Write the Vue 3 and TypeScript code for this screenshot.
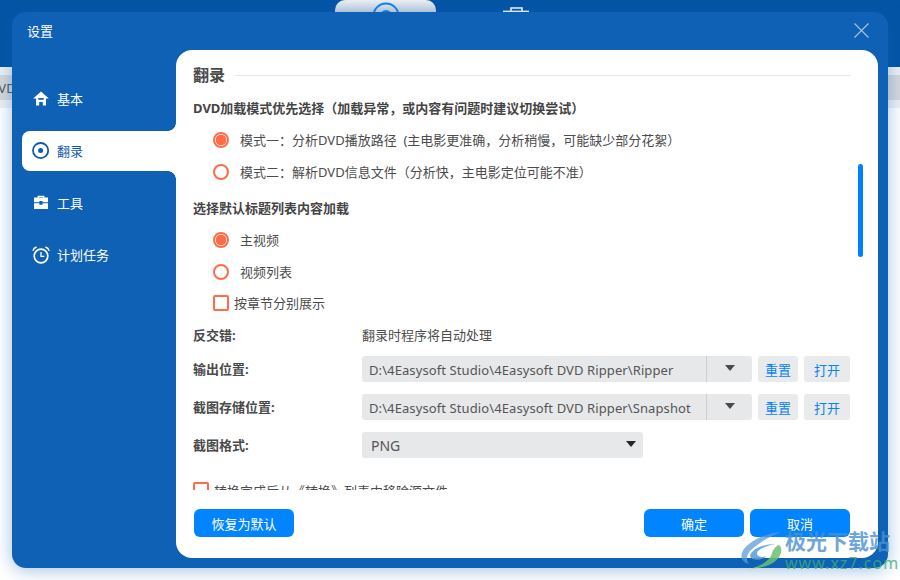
<script setup lang="ts">
interface NavItem { label: string; icon: string; active?: boolean }
const nav: NavItem[] = [
  { label: '基本', icon: 'home' },
  { label: '翻录', icon: 'target', active: true },
  { label: '工具', icon: 'case' },
  { label: '计划任务', icon: 'clock' },
]
const paths = [
  { label: '输出位置:', value: 'D:\\4Easysoft Studio\\4Easysoft DVD Ripper\\Ripper' },
  { label: '截图存储位置:', value: 'D:\\4Easysoft Studio\\4Easysoft DVD Ripper\\Snapshot' },
]
</script>

<template>
  <div class="desktop">
    <header class="app-head">
      <div class="app-tab">
        <svg width="28" height="28" viewBox="0 0 28 28"><circle cx="14" cy="14" r="12.5" fill="none" stroke="#1080f0" stroke-width="2"/><circle cx="14" cy="14" r="6" fill="#1080f0"/></svg>
      </div>
      <svg class="app-head-icon" width="28" height="14" viewBox="0 0 28 14"><path d="M9 12V8h11v4" fill="none" stroke="#fff" stroke-width="1.6"/><path d="M1 11.3h26" stroke="#fff" stroke-width="1.4"/></svg>
    </header>
    <div class="app-strip">
      <div class="app-bar"><span>DVD</span></div>
    </div>

    <section class="modal">
      <div class="modal-head">
        <span class="modal-title">设置</span>
        <svg width="15" height="15" viewBox="0 0 15 15"><path d="M.5.5l14 14M14.5.5l-14 14" stroke="#a5c2e2" stroke-width="1.2" fill="none"/></svg>
      </div>
      <div class="modal-body">
        <nav class="nav">
          <div v-for="item in nav" :key="item.label" class="nav-item" :class="{ active: item.active }">
            <svg class="nav-icon" width="18" height="18" viewBox="0 0 18 18">
              <path v-if="item.icon === 'home'" d="M9 1.6L1.2 8.6H4v6.8h3.2v-3.4h3.6v3.4H14V8.6h2.8zM6.3 8h5.4v1.7H6.3z" fill="currentColor" fill-rule="evenodd"/>
              <g v-else-if="item.icon === 'target'">
                <circle cx="8.6" cy="8.6" r="7.6" fill="none" stroke="currentColor" stroke-width="1.8"/>
                <circle cx="8.6" cy="8.6" r="2.5" fill="currentColor"/>
              </g>
              <path v-else-if="item.icon === 'case'" d="M5.6 3.6V1.8h6.8v1.8H16v4.6H10.6V7H7.4v1.2H2V3.6zM7 3.6h4V3H7zM2 9.3h5.4v1.4h3.2V9.3H16V15H2z" fill="currentColor" fill-rule="evenodd"/>
              <g v-else fill="none" stroke="currentColor">
                <circle cx="9" cy="10" r="6.8" stroke-width="1.7"/>
                <path d="M9 6v4.4h3.4" stroke-width="1.3"/>
                <path d="M.8 4.8Q1.6 1.8 4.6 1M17.2 4.8Q16.4 1.8 13.4 1" stroke-width="1.3"/>
              </g>
            </svg>
            <span class="nav-label">{{ item.label }}</span>
          </div>
        </nav>

        <main class="panel">
          <div class="scroll">
            <div class="section-title"><span>翻录</span><i></i></div>
            <h3 class="heading first">DVD加载模式优先选择（加载异常，或内容有问题时建议切换尝试）</h3>
            <div class="options">
              <label class="opt"><span class="radio on"></span><span class="opt-text">模式一：分析DVD播放路径&nbsp; (主电影更准确，分析稍慢，可能缺少部分花絮）</span></label>
              <label class="opt"><span class="radio"></span><span class="opt-text">模式二：解析DVD信息文件（分析快，主电影定位可能不准）</span></label>
            </div>
            <h3 class="heading second">选择默认标题列表内容加载</h3>
            <div class="options tight">
              <label class="opt"><span class="radio on"></span><span class="opt-text">主视频</span></label>
              <label class="opt"><span class="radio"></span><span class="opt-text">视频列表</span></label>
              <label class="opt chk"><span class="check"></span><span class="opt-text">按章节分别展示</span></label>
            </div>

            <div class="form-row deint">
              <b class="form-label">反交错:</b>
              <span class="form-text">翻录时程序将自动处理</span>
            </div>
            <div v-for="p in paths" :key="p.label" class="form-row field">
              <b class="form-label">{{ p.label }}</b>
              <div class="path">
                <span class="path-text">{{ p.value }}</span>
                <span class="path-caret"><i class="caret"></i></span>
              </div>
              <span class="mini">重置</span>
              <span class="mini wide">打开</span>
            </div>
            <div class="form-row field">
              <b class="form-label">截图格式:</b>
              <div class="format"><span>PNG</span><i class="caret dark"></i></div>
            </div>
            <label class="opt last"><span class="check"></span><span class="opt-text">转换完成后从《转换》列表中移除源文件</span></label>
          </div>
          <footer class="foot">
            <button class="btn">恢复为默认</button>
            <span class="foot-gap"></span>
            <button class="btn">确定</button>
            <button class="btn">取消</button>
          </footer>
          <div class="thumb"></div>
        </main>
      </div>
    </section>

    <div class="mark">
      <svg width="44" height="42" viewBox="0 0 44 42">
        <path d="M40 3C24 4 4 14 1 24c-2 6 2 10 7 11-3-4-3-9 2-14C17 14 30 7 40 3z" fill="#5a9bd8" opacity=".75"/>
        <path d="M9 27c1-7 13-12 26-12-11 2-20 6-19 10 1 3 6 4 9 2-2 4-14 6-16 0z" fill="#5a9bd8" opacity=".85"/>
        <path d="M38 16c5 4 2 15-10 20-6 2-12 4-16 3 10-3 18-9 19-15 1-4 4-7 7-8z" fill="#6cc070" opacity=".85"/>
        <path d="M12 39l-6 3 12-4z" fill="#d8d070" opacity=".7"/>
      </svg>
      <div class="mark-text">
        <b>极光下载站</b>
        <span>www.xz7.com</span>
      </div>
    </div>
  </div>
</template>

<style>
html, body { margin: 0; background: #fff; }
</style>

<style scoped>
.desktop {
  position: relative;
  width: 900px;
  height: 580px;
  overflow: hidden;
  background: #fff;
  font-family: "Noto Sans", "Noto Sans CJK SC", sans-serif;
  font-size: 13px;
  color: #4c4c4c;
}
.app-head {
  height: 67px;
  background: #0454a5;
  display: flex;
  padding-left: 335px;
  box-sizing: border-box;
}
.app-tab {
  width: 101px;
  height: 60px;
  border-radius: 10px 10px 0 0;
  background: linear-gradient(#eef1f5, #c8d3e0 22%);
  display: flex;
  justify-content: center;
  padding-top: 2px;
  box-sizing: border-box;
}
.app-head-icon { margin: 0 0 0 66px; }
.app-strip {
  height: 41px;
  background: #eef0f3;
  padding-top: 8px;
  box-sizing: border-box;
}
.app-bar {
  height: 25px;
  background: #d6d8db;
  display: flex;
  align-items: center;
  font-size: 13px;
  color: #555;
  margin-left: -11px;
}
.modal {
  position: absolute;
  left: 12px;
  top: 12px;
  width: 876px;
  height: 556px;
  border-radius: 14px;
  background: #0f61b5;
  box-shadow: 0 2px 18px rgba(15, 97, 181, 0.4);
  display: flex;
  flex-direction: column;
}
.modal-head {
  height: 38px;
  flex: none;
  display: flex;
  align-items: center;
  justify-content: space-between;
  padding: 0 19px 2px 15px;
  box-sizing: border-box;
  color: #fff;
}
.modal-body { flex: 1; display: flex; min-height: 0; padding: 0 10px 10px 0; }
.nav { width: 164px; flex: none; padding-top: 29px; box-sizing: border-box; }
.nav-item {
  position: relative;
  height: 40px;
  margin: 0 0 12px 10px;
  padding-left: 10px;
  display: flex;
  align-items: center;
  gap: 7px;
  color: #fff;
  border-radius: 8px 0 0 8px;
}
.nav-label { padding-bottom: 1px; }
.nav-item.active { background: #fff; color: #0f5aa8; }
.nav-item.active::before,
.nav-item.active::after {
  content: "";
  position: absolute;
  right: 0;
  width: 8px;
  height: 8px;
  background: radial-gradient(circle at 0 0, #0f61b5 7.5px, #fff 8px);
}
.nav-item.active::before { top: -8px; }
.nav-item.active::after { bottom: -8px; background: radial-gradient(circle at 0 100%, #0f61b5 7.5px, #fff 8px); }
.panel {
  position: relative;
  flex: 1;
  background: #fff;
  border-radius: 16px;
  display: flex;
  flex-direction: column;
  min-width: 0;
}
.scroll {
  height: 440px;
  flex: none;
  overflow: hidden;
  padding: 16px 28px 0 17px;
  box-sizing: border-box;
}
.section-title {
  display: flex;
  align-items: center;
  gap: 10px;
  height: 20px;
  font-size: 16px;
  line-height: 18px;
  font-weight: 700;
  color: #4a4a4a;
}
.section-title span { padding-bottom: 2px; }
.section-title i { flex: 1; height: 1px; background: #e8e8e8; margin-bottom: 2px; }
.heading { margin: 0; height: 20px; line-height: 18px; font-size: 13px; font-weight: 700; color: #444; white-space: nowrap; }
.heading.first { margin-top: 13px; }
.heading.second { margin-top: 17px; }
.options { display: flex; flex-direction: column; gap: 12px; margin-top: 11px; padding-left: 20px; }
.opt { display: flex; align-items: center; height: 20px; gap: 11px; white-space: nowrap; }
.opt-text { padding-bottom: 1px; }
.opt.chk { gap: 5px; margin-top: -1px; }
.opt.last { margin-top: 24px; align-items: flex-start; gap: 5px; line-height: 18px; }
.radio {
  width: 16px;
  height: 16px;
  flex: none;
  box-sizing: border-box;
  border: 2px solid #ff6c47;
  border-radius: 50%;
  margin-top: -1px;
}
.radio.on { background: radial-gradient(circle, #ff6c47 5px, #fff 5.6px); }
.check { width: 16px; height: 16px; flex: none; box-sizing: border-box; border: 2px solid #ff6c47; border-radius: 2px; }
.form-row { display: flex; align-items: center; }
.form-label { width: 169px; flex: none; font-weight: 700; color: #4a4a4a; padding-bottom: 1px; }
.form-text { padding-bottom: 2px; }
.form-row.deint { height: 20px; margin-top: 12px; }
.form-row.deint .form-label { padding-bottom: 2px; }
.form-row.field { height: 26px; margin-top: 12px; }
.form-row.deint + .form-row.field { margin-top: 11px; }
.path {
  width: 390px;
  height: 26px;
  background: #e7e8ea;
  border-radius: 3px;
  display: flex;
  align-items: center;
  flex: none;
}
.path-text { flex: 1; padding: 1px 0 0 7px; white-space: nowrap; color: #555; letter-spacing: .1px; }
.path-caret {
  width: 46px;
  height: 26px;
  border-left: 1px solid #cdced0;
  display: flex;
  align-items: center;
  justify-content: center;
  padding-bottom: 2px;
  box-sizing: border-box;
}
.caret { width: 0; height: 0; border: 5px solid transparent; border-top: 6px solid #4a4a4a; border-bottom: 0; }
.caret.dark { border-top-color: #23262b; margin-bottom: 2px; }
.mini {
  width: 40px;
  height: 26px;
  margin-left: 6px;
  background: #e9eaec;
  color: #0a84f0;
  border-radius: 3px;
  display: flex;
  align-items: center;
  justify-content: center;
}
.mini.wide { width: 46px; }
.format {
  width: 281px;
  height: 26px;
  background: #e7e8ea;
  border-radius: 3px;
  display: flex;
  align-items: center;
  justify-content: space-between;
  padding: 0 7px 0 9px;
  box-sizing: border-box;
  color: #555;
  font-size: 14px;
}
.foot { flex: 1; display: flex; gap: 6px; padding: 19px 28px 0 18px; align-items: flex-start; }
.foot-gap { flex: 1; }
.btn {
  width: 100px;
  height: 28px;
  padding: 0;
  border: 0;
  border-radius: 6px;
  background: #0084ff;
  color: #fff;
  font: inherit;
}
.thumb { position: absolute; left: 682px; top: 114px; width: 5px; height: 93px; border-radius: 3px; background: #0080ff; }
.mark {
  position: absolute;
  left: 741px;
  top: 529px;
  display: flex;
  pointer-events: none;
}
.mark-text { display: flex; flex-direction: column; opacity: .8; margin-left: 0; }
.mark-text b { font-size: 21px; line-height: 25px; color: #4a90d0; white-space: nowrap; }
.mark-text span { font-size: 16px; line-height: 18px; color: #3cae78; letter-spacing: 1px; white-space: nowrap; }
</style>
